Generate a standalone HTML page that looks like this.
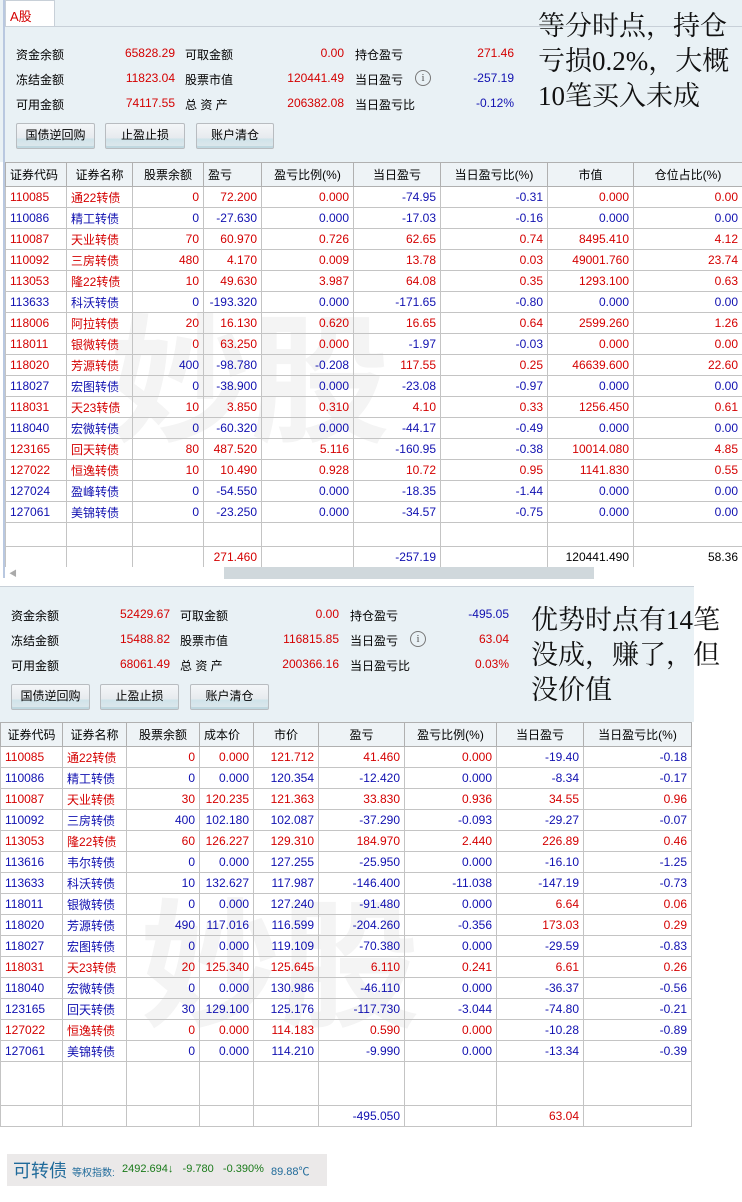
<!DOCTYPE html>
<html><head><meta charset="utf-8"><style>
*{margin:0;padding:0;box-sizing:border-box}
body{width:742px;height:1202px;background:#fff;position:relative;overflow:hidden;font-family:"Liberation Sans","Noto Sans CJK SC",sans-serif;font-size:12px;color:#000}
.abs{position:absolute}
.panel{background:#e9f1f5}
.r{color:#d40000}.b{color:#1010b0}
.lbl{position:absolute;font-size:12px}
.val{position:absolute;text-align:right;font-size:12px}
.btn{position:absolute;height:26px;border:1px solid #b8bcc0;border-radius:2px;background:linear-gradient(#f4f6f8 0,#e6eaee 60%,#cfe3ea 61%,#dfe8ec 100%);text-align:center;line-height:23px;font-size:12px;box-shadow:inset 0 -2px 0 #c0d8e0}
.info{position:absolute;width:16px;height:16px;border:1px solid #777;border-radius:50%;font-size:11px;line-height:14px;text-align:center;color:#555;font-family:"Liberation Serif",serif}
.note{position:absolute;font-family:"Liberation Serif","Noto Serif CJK SC",serif;font-size:27px;line-height:35px;color:#111}
table{border-collapse:collapse;table-layout:fixed;position:absolute;background:transparent}
td,th{border:1px solid #c4c4c4;height:21px;padding:0 4px;white-space:nowrap;overflow:hidden;font-weight:normal;text-align:right}
th{background:#eef3f6;height:24px;text-align:center;border-color:#b0b0b0}
td.c,td.n{text-align:left}
.wm{position:absolute;color:#f4f4f4;font-size:140px;font-family:"Noto Sans CJK SC",sans-serif;font-weight:bold;z-index:0}
</style></head><body>

<div class="abs panel" style="left:0;top:0;width:742px;height:162px"></div>
<div class="abs" style="left:3px;top:0;width:2px;height:578px;background:#b9c8e0"></div>
<div class="abs" style="left:5px;top:0;width:50px;height:26px;background:#fff;border:1px solid #c8d0d8;border-bottom:none"></div>
<div class="abs r" style="left:10px;top:6px;font-size:13px">A股</div>
<div class="abs" style="left:5px;top:26px;width:737px;height:1px;background:#c8d0d8"></div>

<div class="lbl" style="left:16px;top:46px">资金余额</div><div class="val r" style="left:95px;width:80px;top:46px">65828.29</div>
<div class="lbl" style="left:185px;top:46px">可取金额</div><div class="val r" style="left:264px;width:80px;top:46px">0.00</div>
<div class="lbl" style="left:355px;top:46px">持仓盈亏</div><div class="val r" style="left:434px;width:80px;top:46px">271.46</div>
<div class="lbl" style="left:16px;top:71px">冻结金额</div><div class="val r" style="left:95px;width:80px;top:71px">11823.04</div>
<div class="lbl" style="left:185px;top:71px">股票市值</div><div class="val r" style="left:264px;width:80px;top:71px">120441.49</div>
<div class="lbl" style="left:355px;top:71px">当日盈亏</div><div class="info" style="left:415px;top:70px">i</div><div class="val b" style="left:434px;width:80px;top:71px">-257.19</div>
<div class="lbl" style="left:16px;top:96px">可用金额</div><div class="val r" style="left:95px;width:80px;top:96px">74117.55</div>
<div class="lbl" style="left:185px;top:96px">总 资 产</div><div class="val r" style="left:264px;width:80px;top:96px">206382.08</div>
<div class="lbl" style="left:355px;top:96px">当日盈亏比</div><div class="val b" style="left:434px;width:80px;top:96px">-0.12%</div>
<div class="btn" style="left:16px;top:123px;width:79px">国债逆回购</div>
<div class="btn" style="left:105px;top:123px;width:80px">止盈止损</div>
<div class="btn" style="left:196px;top:123px;width:78px">账户清仓</div>
<div class="note" style="left:538px;top:9px">等分时点，持仓<br>亏损0.2%，大概<br>10笔买入未成</div>

<div class="wm" style="left:110px;top:270px">妙股</div>
<table style="left:5px;top:162px;width:737px">
<colgroup><col style="width:61px"><col style="width:66px"><col style="width:71px"><col style="width:58px"><col style="width:92px"><col style="width:87px"><col style="width:107px"><col style="width:86px"><col style="width:109px"></colgroup>
<tr><th style="text-align:left">证券代码</th><th>证券名称</th><th>股票余额</th><th style="text-align:left">盈亏</th><th>盈亏比例(%)</th><th>当日盈亏</th><th>当日盈亏比(%)</th><th>市值</th><th>仓位占比(%)</th></tr>
<tr class="r"><td class="c">110085</td><td class="n">通22转债</td><td>0</td><td>72.200</td><td>0.000</td><td class="b">-74.95</td><td class="b">-0.31</td><td>0.000</td><td>0.00</td></tr>
<tr class="b"><td class="c">110086</td><td class="n">精工转债</td><td>0</td><td>-27.630</td><td>0.000</td><td>-17.03</td><td>-0.16</td><td>0.000</td><td>0.00</td></tr>
<tr class="r"><td class="c">110087</td><td class="n">天业转债</td><td>70</td><td>60.970</td><td>0.726</td><td>62.65</td><td>0.74</td><td>8495.410</td><td>4.12</td></tr>
<tr class="r"><td class="c">110092</td><td class="n">三房转债</td><td>480</td><td>4.170</td><td>0.009</td><td>13.78</td><td>0.03</td><td>49001.760</td><td>23.74</td></tr>
<tr class="r"><td class="c">113053</td><td class="n">隆22转债</td><td>10</td><td>49.630</td><td>3.987</td><td>64.08</td><td>0.35</td><td>1293.100</td><td>0.63</td></tr>
<tr class="b"><td class="c">113633</td><td class="n">科沃转债</td><td>0</td><td>-193.320</td><td>0.000</td><td>-171.65</td><td>-0.80</td><td>0.000</td><td>0.00</td></tr>
<tr class="r"><td class="c">118006</td><td class="n">阿拉转债</td><td>20</td><td>16.130</td><td>0.620</td><td>16.65</td><td>0.64</td><td>2599.260</td><td>1.26</td></tr>
<tr class="r"><td class="c">118011</td><td class="n">银微转债</td><td>0</td><td>63.250</td><td>0.000</td><td class="b">-1.97</td><td class="b">-0.03</td><td>0.000</td><td>0.00</td></tr>
<tr class="b"><td class="c r">118020</td><td class="n r">芳源转债</td><td>400</td><td>-98.780</td><td>-0.208</td><td class="r">117.55</td><td class="r">0.25</td><td class="r">46639.600</td><td class="r">22.60</td></tr>
<tr class="b"><td class="c">118027</td><td class="n">宏图转债</td><td>0</td><td>-38.900</td><td>0.000</td><td>-23.08</td><td>-0.97</td><td>0.000</td><td>0.00</td></tr>
<tr class="r"><td class="c">118031</td><td class="n">天23转债</td><td>10</td><td>3.850</td><td>0.310</td><td>4.10</td><td>0.33</td><td>1256.450</td><td>0.61</td></tr>
<tr class="b"><td class="c">118040</td><td class="n">宏微转债</td><td>0</td><td>-60.320</td><td>0.000</td><td>-44.17</td><td>-0.49</td><td>0.000</td><td>0.00</td></tr>
<tr class="r"><td class="c">123165</td><td class="n">回天转债</td><td>80</td><td>487.520</td><td>5.116</td><td class="b">-160.95</td><td class="b">-0.38</td><td>10014.080</td><td>4.85</td></tr>
<tr class="r"><td class="c">127022</td><td class="n">恒逸转债</td><td>10</td><td>10.490</td><td>0.928</td><td>10.72</td><td>0.95</td><td>1141.830</td><td>0.55</td></tr>
<tr class="b"><td class="c">127024</td><td class="n">盈峰转债</td><td>0</td><td>-54.550</td><td>0.000</td><td>-18.35</td><td>-1.44</td><td>0.000</td><td>0.00</td></tr>
<tr class="b"><td class="c">127061</td><td class="n">美锦转债</td><td>0</td><td>-23.250</td><td>0.000</td><td>-34.57</td><td>-0.75</td><td>0.000</td><td>0.00</td></tr>
<tr><td style="height:24px"></td><td></td><td></td><td></td><td></td><td></td><td></td><td></td><td></td></tr>
<tr><td></td><td></td><td></td><td class="r">271.460</td><td></td><td class="b">-257.19</td><td></td><td>120441.490</td><td>58.36</td></tr>
</table>
<div class="abs" style="left:5px;top:567px;width:737px;height:12px;background:#fff"></div>
<div class="abs" style="left:9px;top:568px;color:#aaa;font-size:8px">◀</div>
<div class="abs" style="left:224px;top:567px;width:370px;height:12px;background:#d0d8dc"></div>

<div class="abs panel" style="left:0;top:586px;width:694px;height:136px;border-top:1px solid #c8d0d8"></div>
<div class="lbl" style="left:11px;top:607px">资金余额</div><div class="val r" style="left:90px;width:80px;top:607px">52429.67</div>
<div class="lbl" style="left:180px;top:607px">可取金额</div><div class="val r" style="left:259px;width:80px;top:607px">0.00</div>
<div class="lbl" style="left:350px;top:607px">持仓盈亏</div><div class="val b" style="left:429px;width:80px;top:607px">-495.05</div>
<div class="lbl" style="left:11px;top:632px">冻结金额</div><div class="val r" style="left:90px;width:80px;top:632px">15488.82</div>
<div class="lbl" style="left:180px;top:632px">股票市值</div><div class="val r" style="left:259px;width:80px;top:632px">116815.85</div>
<div class="lbl" style="left:350px;top:632px">当日盈亏</div><div class="info" style="left:410px;top:631px">i</div><div class="val r" style="left:429px;width:80px;top:632px">63.04</div>
<div class="lbl" style="left:11px;top:657px">可用金额</div><div class="val r" style="left:90px;width:80px;top:657px">68061.49</div>
<div class="lbl" style="left:180px;top:657px">总 资 产</div><div class="val r" style="left:259px;width:80px;top:657px">200366.16</div>
<div class="lbl" style="left:350px;top:657px">当日盈亏比</div><div class="val r" style="left:429px;width:80px;top:657px">0.03%</div>
<div class="btn" style="left:11px;top:684px;width:79px">国债逆回购</div>
<div class="btn" style="left:100px;top:684px;width:79px">止盈止损</div>
<div class="btn" style="left:190px;top:684px;width:79px">账户清仓</div>
<div class="note" style="left:531px;top:603px">优势时点有14笔<br>没成，赚了，但<br>没价值</div>

<div class="wm" style="left:140px;top:855px">妙股</div>
<table style="left:0;top:722px;width:691px">
<colgroup><col style="width:62px"><col style="width:64px"><col style="width:73px"><col style="width:54px"><col style="width:65px"><col style="width:86px"><col style="width:92px"><col style="width:87px"><col style="width:108px"></colgroup>
<tr><th>证券代码</th><th>证券名称</th><th>股票余额</th><th style="text-align:left">成本价</th><th>市价</th><th>盈亏</th><th>盈亏比例(%)</th><th>当日盈亏</th><th>当日盈亏比(%)</th></tr>
<tr class="r"><td class="c">110085</td><td class="n">通22转债</td><td>0</td><td>0.000</td><td>121.712</td><td>41.460</td><td>0.000</td><td class="b">-19.40</td><td class="b">-0.18</td></tr>
<tr class="b"><td class="c">110086</td><td class="n">精工转债</td><td>0</td><td>0.000</td><td>120.354</td><td>-12.420</td><td>0.000</td><td>-8.34</td><td>-0.17</td></tr>
<tr class="r"><td class="c">110087</td><td class="n">天业转债</td><td>30</td><td>120.235</td><td>121.363</td><td>33.830</td><td>0.936</td><td>34.55</td><td>0.96</td></tr>
<tr class="b"><td class="c">110092</td><td class="n">三房转债</td><td>400</td><td>102.180</td><td>102.087</td><td>-37.290</td><td>-0.093</td><td>-29.27</td><td>-0.07</td></tr>
<tr class="r"><td class="c">113053</td><td class="n">隆22转债</td><td>60</td><td>126.227</td><td>129.310</td><td>184.970</td><td>2.440</td><td>226.89</td><td>0.46</td></tr>
<tr class="b"><td class="c">113616</td><td class="n">韦尔转债</td><td>0</td><td>0.000</td><td>127.255</td><td>-25.950</td><td>0.000</td><td>-16.10</td><td>-1.25</td></tr>
<tr class="b"><td class="c">113633</td><td class="n">科沃转债</td><td>10</td><td>132.627</td><td>117.987</td><td>-146.400</td><td>-11.038</td><td>-147.19</td><td>-0.73</td></tr>
<tr class="b"><td class="c">118011</td><td class="n">银微转债</td><td>0</td><td>0.000</td><td>127.240</td><td>-91.480</td><td>0.000</td><td class="r">6.64</td><td class="r">0.06</td></tr>
<tr class="b"><td class="c">118020</td><td class="n">芳源转债</td><td>490</td><td>117.016</td><td>116.599</td><td>-204.260</td><td>-0.356</td><td class="r">173.03</td><td class="r">0.29</td></tr>
<tr class="b"><td class="c">118027</td><td class="n">宏图转债</td><td>0</td><td>0.000</td><td>119.109</td><td>-70.380</td><td>0.000</td><td>-29.59</td><td>-0.83</td></tr>
<tr class="r"><td class="c">118031</td><td class="n">天23转债</td><td>20</td><td>125.340</td><td>125.645</td><td>6.110</td><td>0.241</td><td>6.61</td><td>0.26</td></tr>
<tr class="b"><td class="c">118040</td><td class="n">宏微转债</td><td>0</td><td>0.000</td><td>130.986</td><td>-46.110</td><td>0.000</td><td>-36.37</td><td>-0.56</td></tr>
<tr class="b"><td class="c">123165</td><td class="n">回天转债</td><td>30</td><td>129.100</td><td>125.176</td><td>-117.730</td><td>-3.044</td><td>-74.80</td><td>-0.21</td></tr>
<tr class="r"><td class="c">127022</td><td class="n">恒逸转债</td><td>0</td><td>0.000</td><td>114.183</td><td>0.590</td><td>0.000</td><td class="b">-10.28</td><td class="b">-0.89</td></tr>
<tr class="b"><td class="c">127061</td><td class="n">美锦转债</td><td>0</td><td>0.000</td><td>114.210</td><td>-9.990</td><td>0.000</td><td>-13.34</td><td>-0.39</td></tr>
<tr><td style="height:44px"></td><td></td><td></td><td></td><td></td><td></td><td></td><td></td><td></td></tr>
<tr><td></td><td></td><td></td><td></td><td></td><td class="b">-495.050</td><td></td><td class="r">63.04</td><td></td></tr>
</table>

<div class="abs" style="left:7px;top:1154px;width:320px;height:32px;background:#ebe9e9"></div>
<div class="abs" style="left:13px;top:1157px;font-size:18px;color:#1f6a9a">可转债</div>
<div class="abs" style="left:72px;top:1164px;font-size:10px;color:#1f6a9a">等权指数:</div>
<div class="abs" style="left:122px;top:1163px;font-size:11px;color:#1a7a1a">2492.694↓&nbsp;&nbsp;&nbsp;-9.780&nbsp;&nbsp;&nbsp;-0.390%</div>
<div class="abs" style="left:271px;top:1163px;font-size:11px;color:#1f6a9a">89.88℃</div>
</body></html>
